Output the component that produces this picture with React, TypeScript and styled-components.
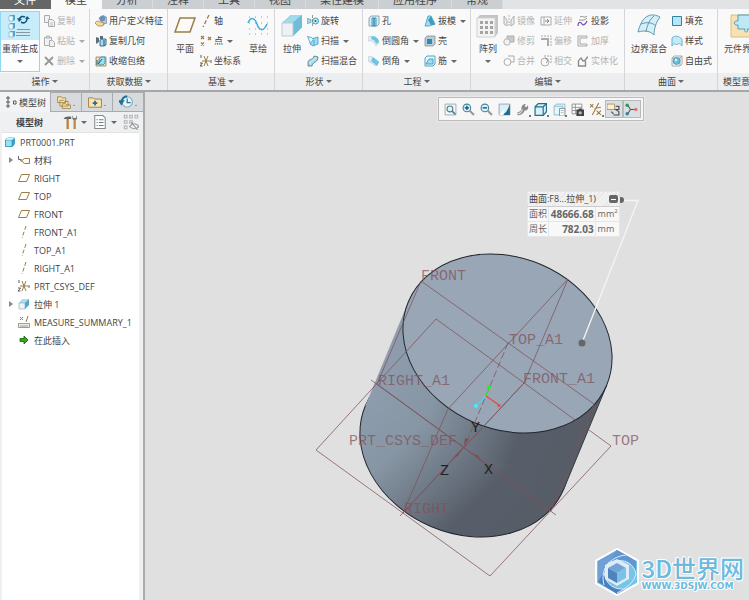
import React from 'react';
import styled, { createGlobalStyle, css } from 'styled-components';

const GlobalStyle = createGlobalStyle`
  *, *::before, *::after { box-sizing: border-box; }
  body {
    margin: 0;
    background: #e0e0e0;
    color: #444;
    font-family: "Open Sans", "Noto Sans CJK SC", sans-serif;
    font-size: 9px;
    overflow: hidden;
  }
  button {
    font: inherit;
    color: inherit;
    background: none;
    border: 0;
    padding: 0;
    margin: 0;
    white-space: nowrap;
  }
  svg { display: block; flex: none; }
`;

/* ---------- shell ---------- */

const Shell = styled.div`
  display: flex;
  flex-direction: column;
  height: 100vh;
  overflow: hidden;
`;

const TabBar = styled.nav`
  display: flex;
  height: 9px;
  flex: none;
  overflow: hidden;
  background: #e2e3e4;
`;

const RibbonTab = styled.button<{ $kind?: 'file' | 'active' }>`
  display: flex;
  align-items: flex-end;
  justify-content: center;
  height: 9px;
  padding: 0 14px 2px;
  font-size: 11px;
  line-height: 14px;
  flex: none;
  overflow: hidden;
  background: #cbcfd2;
  border-right: 1px solid #d9dcde;
  ${p => p.$kind === 'file' && css`background: #666; color: #fff; border-color: #666;`}
  ${p => p.$kind === 'active' && css`background: #fafafa; border-color: #fafafa;`}
`;

const Ribbon = styled.section`
  display: flex;
  flex: none;
  overflow: hidden;
  background: #f9f9fa;
  border-bottom: 2px solid #a5a7a9;
`;

const GroupBox = styled.div<{ $w: number }>`
  display: flex;
  flex-direction: column;
  flex: none;
  min-width: ${p => p.$w}px;
  border-right: 1px solid #d3d5d7;
`;

const GroupBody = styled.div<{ $pad?: number }>`
  display: flex;
  align-items: flex-start;
  height: 64px;
  padding: 2px 0 0 ${p => p.$pad ?? 5}px;
`;

const GroupFoot = styled.button`
  display: flex;
  align-items: center;
  justify-content: center;
  gap: 2px;
  height: 17px;
  background: #eceeef;
`;

const Col = styled.div<{ $w?: number }>`
  display: flex;
  flex-direction: column;
  min-width: ${p => p.$w ?? 0}px;
`;

const Small = styled.button`
  display: flex;
  align-items: center;
  gap: 2px;
  height: 20px;
  line-height: 12px;
  &:disabled { color: #b4b4b4; }
  &:disabled svg { filter: grayscale(1); opacity: 0.6; }
`;

const Big = styled.button<{ $w: number; $hot?: boolean }>`
  display: flex;
  flex-direction: column;
  align-items: center;
  width: ${p => p.$w}px;
  height: 61px;
  padding-top: 2px;
  line-height: 12px;
  border: 1px solid transparent;
  ${p => p.$hot && css`
    border-color: #90d8f2;
    background: linear-gradient(#c8edfa 28px, #fbfdfe 28px);
  `}
`;

const BigLabel = styled.span`
  margin: 5px 0;
`;

const ArrowDown = styled.span<{ $gap?: number }>`
  margin-left: ${p => p.$gap ?? 0}px;
  border: 3px solid transparent;
  border-top: 3px solid #666;
  border-bottom: 0;
  button:disabled & { border-top-color: #aaa; }
`;

/* ---------- side panel ---------- */

const Main = styled.main`
  display: flex;
  flex: 1;
  min-height: 0;
`;

const Side = styled.aside`
  display: flex;
  flex-direction: column;
  width: 145px;
  flex: none;
  background: #eff0f1;
  border-right: 2px solid #a9abad;
`;

const SideTabs = styled.div`
  display: flex;
  height: 20px;
  flex: none;
`;

const SideTab = styled.button<{ $on?: boolean }>`
  display: flex;
  align-items: center;
  justify-content: center;
  gap: 2px;
  flex: 1;
  background: #d8dbdd;
  border: solid #a9abad;
  border-width: 1px 0 1px 1px;
  ${p => p.$on && css`flex: 0 0 50px; background: #f2f3f4; border-color: transparent;`}
`;

const SideTools = styled.div`
  display: flex;
  align-items: center;
  height: 20px;
  flex: none;
  padding: 0 4px 0 16px;
  gap: 6px;
`;

const SideTitle = styled.h2`
  margin: 0;
  flex: 1;
  font-size: 9px;
  font-weight: 600;
`;

const ToolButton = styled.button`
  display: flex;
  align-items: center;
  gap: 4px;
`;

const Tree = styled.ul`
  flex: 1;
  margin: 0 4px 0 2px;
  padding: 0;
  list-style: none;
  background: #fff;
  border-top: 1px solid #e0e2e3;
  overflow: hidden;
`;

const Node = styled.li<{ $root?: boolean }>`
  display: flex;
  align-items: center;
  height: 18px;
  gap: 4px;
  padding-left: ${p => (p.$root ? 2 : 6)}px;
  font-size: 9px;
  white-space: nowrap;
`;

const Twist = styled.button`
  width: 6px;
  height: 8px;
  display: flex;
  align-items: center;
`;

const TwistSpace = styled.span`
  width: 6px;
`;

/* ---------- viewport ---------- */

const Viewport = styled.section`
  position: relative;
  flex: 1;
  min-width: 0;
  background: #e0e0e0;
`;

const Scene = styled.svg`
  width: 100%;
  height: 100%;
  font-family: "Liberation Mono", monospace;
  font-size: 15px;
`;

const FloatBar = styled.div`
  position: absolute;
  top: 5px;
  left: 293px;
  display: flex;
  justify-content: space-between;
  width: 206px;
  padding: 2px;
  border: 1px solid #bbb;
  background: #f7f7f7;
  outline: 1px solid #e9e9e9;
`;

const FloatButton = styled.button<{ $on?: boolean }>`
  display: flex;
  align-items: center;
  justify-content: center;
  position: relative;
  width: 18px;
  height: 18px;
  border: 1px solid transparent;
  ${p => p.$on && css`background: #dcdfe1; border-color: #b7babd;`}
`;

const CornerMark = styled.i`
  position: absolute;
  right: 0;
  bottom: 0;
  width: 2px;
  height: 2px;
  background: #777;
`;

const Measure = styled.table`
  position: absolute;
  top: 99px;
  left: 382px;
  width: 93px;
  border-collapse: collapse;
  background: #f8f8f8;
  border: 1px solid #bcbcbc;
  color: #666;
  line-height: 12px;
  td, th { padding: 1px; border: 1px solid #e6e6e6; white-space: nowrap; }
  th { font-weight: 400; text-align: left; }
  td:last-child { padding-left: 2px; }
  thead th {
    background: repeating-linear-gradient(135deg, #f4f4f4 0 2px, #e4e4e4 2px 3px);
    border-bottom-color: #ccc;
    color: #444;
  }
  sup { font-size: 6px; line-height: 6px; }
`;

const MeasureHead = styled.div`
  display: flex;
  align-items: center;
  justify-content: space-between;
`;

const Value = styled.td`
  font-weight: 700;
  font-size: 10px;
  text-align: right;
`;

const Minus = styled.button`
  width: 9px;
  height: 8px;
  display: flex;
  align-items: center;
  justify-content: center;
  background: #666;
  border-radius: 2px;
  &::after { content: ""; width: 5px; height: 1px; background: #fff; }
`;

const Brand = styled.a`
  position: absolute;
  right: 5px;
  bottom: 4px;
  display: flex;
  align-items: center;
  gap: 3px;
  text-decoration: none;
  color: #6cbade;
`;

const BrandText = styled.span`
  display: flex;
  flex-direction: column;
  text-shadow: 1px 0 #fff, -1px 0 #fff, 0 1px #fff, 0 -1px #fff, 1px 1px #fff, -1px -1px #fff;
`;

const BrandName = styled.strong`
  font-family: "Noto Sans CJK SC", sans-serif;
  font-size: 24px;
  line-height: 28px;
  font-weight: 500;
`;

const BrandUrl = styled.small`
  font: bold 9px/9px "DejaVu Sans", sans-serif;
`;

/* ---------- icons ---------- */

const INK = '#5b6e7a';
const BLUE = '#3c9cc4';
const SKY = '#9fdcf1';
const GOLD = '#9b7d45';

const art: Record<string, React.ReactNode> = {
  copy: <g fill="#eee" stroke="#777"><path d="M1.500 .5h5v7h-5z" /><path d="M5.500 4.500h4l2 2v5h-6z" /><path d="M7 8h3M7 10h3" strokeWidth=".7" /></g>,
  paste: <g fill="#eee" stroke="#777"><path d="M1.500 2.500h7v8h-7z" /><path d="M3.500 1h3v2h-3z" /><path d="M6.500 5.500h3l2 2v4h-5z" /></g>,
  del: <path d="M2 2l8 8M10 2l-8 8" stroke="#555" strokeWidth="1.800" />,
  udf: <g><path d="M4 3l4-2.500 4 2V8L8 9.500z" fill="#b5c6da" stroke={INK} strokeWidth=".6" /><circle cx="7.500" cy="3.500" r="2.800" fill="#6c90bd" /><path d="M0 8c2-3 4-2 6-1l3 1-1 3H3z" fill="#f3d89b" stroke={GOLD} strokeWidth=".7" /></g>,
  geom: <g><path d="M1 2v7l3-2V3zM5 1h3v3H5z" fill={INK} /><path d="M5 5l2-1h4v6l-2 1H5z" fill={SKY} stroke="#24576e" strokeWidth=".8" /><path d="M9 5v6" stroke="#24576e" /></g>,
  shrink: <g><path d="M1 2h10v9H1z" fill="#f1e3bd" stroke={GOLD} strokeWidth=".8" /><path d="M4 4l2-2h4v6L8 10H4z" fill={SKY} stroke={BLUE} /><path d="M3 9l4-5M2 5v5" stroke="#24576e" /></g>,
  axis: <path d="M9 0L3 12" stroke={GOLD} strokeWidth="1.300" strokeDasharray="4 2" />,
  point: <g stroke={GOLD}><path d="M1 1l3 3M4 1L1 4M8 2l3 3M11 2l-3 3M1 7.500l3 3M4 7.500l-3 3" strokeWidth="1.200" /></g>,
  csys: <g stroke={GOLD}><path d="M4 1l4 10M8 1L4 11M2 6h8" /><path d="M1 0v3M0 8h2.500L0 11h2.500M11 5v3" stroke="#333" strokeWidth=".8" /></g>,
  revolve: <g><path d="M0 3.500l4 1v3l-4 1z" fill={SKY} stroke={BLUE} strokeWidth=".7" /><circle cx="8.500" cy="6" r="3" fill="#c9ebf6" stroke={BLUE} /><circle cx="8.500" cy="6" r="1" fill="#24576e" /><path d="M5.500 0v12" stroke={GOLD} strokeWidth=".8" strokeDasharray="3 1" /></g>,
  sweep: <g stroke={BLUE} strokeWidth=".8"><path d="M4 4l7-2v7l-5 2-3-2z" fill={SKY} /><path d="M.5 1.500l4 1 2 2-3 4z" fill="#def4fa" /><path d="M7 5v5" /></g>,
  blend: <g><path d="M1 8c0-5 5-2 6-7l4 1c0 6-5 4-6 9l-4 0z" fill={SKY} stroke={INK} strokeWidth=".8" /><path d="M3 9c0-4 5-3 6-7" stroke="#def4fa" /></g>,
  hole: <g><path d="M1 3l2-2h8v8l-2 2H1z" fill="#d7eef6" stroke="#82959e" strokeWidth=".8" /><path d="M4 3h4v8H4z" fill={SKY} stroke={BLUE} /><path d="M6 3v8" stroke="#246985" /></g>,
  round: <g><path d="M0 2c5-2 9 1 11 6l-3 3C6 7 4 5 0 6z" fill="#e1eff4" stroke="#b7c6cc" strokeWidth=".6" /><path d="M4 1c4 0 7 3 7 6L8 9C7 6 6 5 3 4z" fill="#6cc3e3" /></g>,
  chamfer: <g><path d="M0 2l3-1 8 6-3 4-8-5z" fill="#dcebf1" stroke="#b7c6cc" strokeWidth=".6" /><path d="M5 2l6 5-2 4-6-5z" fill="#6cc3e3" /></g>,
  draft: <g><path d="M4 1l3 0 4 8-6 2H1z" fill={SKY} stroke={BLUE} strokeWidth=".8" /><path d="M7 1l4 9H7L4 5z" fill="#3f9cc0" /></g>,
  shell: <g><path d="M1 3l2-2h8v8l-2 2H1z" fill="#b9cdd5" stroke="#80949d" strokeWidth=".8" /><path d="M3 4h5v5H3z" fill="#318bb1" /></g>,
  rib: <g fill="none" stroke={BLUE} strokeWidth=".9"><path d="M1 3l2-2h8v8l-2 2H1z" fill="#e6f5fa" /><path d="M2 9l3-5h4v5z" fill={SKY} /></g>,
  mirror: <g fill="#e5e5e5" stroke="#777" strokeWidth=".9"><path d="M1 1l3 4v6L1 9zM11 1L8 5v6l3-2z" /><path d="M6 0v12" strokeDasharray="2 1" /></g>,
  trim: <g fill="#aaa" stroke="#777" strokeWidth=".9"><path d="M4 1h7v6H4z" /><circle cx="4" cy="7" r="3.200" fill="#eee" /></g>,
  merge: <g fill="none" stroke="#777"><path d="M5 1h6v6H8" /><circle cx="4.500" cy="7" r="3.500" /></g>,
  extend: <g fill="none" stroke="#777"><path d="M1 2h10v8H1zM4 2v8" /><path d="M5 6h4M7 4l2 2-2 2" stroke="#333" /></g>,
  offset: <g fill="none" stroke="#777"><path d="M1 1h10v10" strokeDasharray="2 1" /><path d="M1 4h7v7" strokeWidth="2" /></g>,
  intersect: <g fill="none" stroke="#777"><path d="M4 1h7v7" strokeDasharray="2 1" /><circle cx="5" cy="7" r="4" /><path d="M5 3c3 1 3 4 1 5" stroke="#333" /></g>,
  project: <g fill="none"><path d="M3 2c3-2 4 2 7-1M2 5c3 0 5 1 8-2" stroke="#8d9497" /><path d="M1 11c0-5 3-4 4-2s4 0 5-3" stroke="#7f4eae" strokeWidth="1.200" /></g>,
  thicken: <path d="M10 1H1v10h9V9H3V3h7z" fill="#eee" stroke="#777" />,
  solid: <path d="M2 5l2-2 2 3c3 1 3-4 5-4M1.500 5v6h7V6" fill="none" stroke="#444" strokeWidth="1.400" />,
  fill: <path d="M1.500 1.500h9v9h-9z" fill="#b7e7f6" stroke="#34809f" />,
  style: <path d="M1 3c3-3 7-2 10 1v7c-2-3-4-3-5-1-2-2-4-1-5 1z" fill="#c6eaf5" stroke="#4ba7cb" strokeWidth=".8" />,
  free: <g><path d="M1 3l2-2h8v8l-2 2H1zM1 3h8v8M9 3l2-2" fill="none" stroke="#999" strokeWidth=".8" /><circle cx="5.500" cy="6" r="3.500" fill="#65bfe0" stroke="#2f86a8" strokeWidth=".6" /><circle cx="5" cy="5" r="1.200" fill="#dff5fc" /></g>,

  part: <g stroke="#2f94ba" strokeWidth=".7"><path d="M1.500 4l2-2h7v6l-2 2.500h-7z" fill="#3f9fc4" /><path d="M1.500 4H8v6.500H1.500z" fill="#9be0f3" /><path d="M1.500 4l2-2h7L8 4z" fill="#c8effa" stroke="none" /></g>,
  material: <g fill="none"><path d="M.5 2v3.500h3M1 5l3 2.500" stroke="#666" /><path d="M3.500 7l3-2.500h5v5h-5z" stroke={GOLD} fill="#fbf8f0" /></g>,
  plane: <path d="M3.500 2.500h8l-3 7h-8z" fill="none" stroke={GOLD} />,
  axisThin: <path d="M8 0L4 12" stroke={GOLD} strokeDasharray="4 2" />,
  extrude: <g><path d="M1 5l4-4h6v6l-4 4z" fill="#4fa6cb" /><path d="M5 1h6L7 5H1z" fill="#a9dff0" /><path d="M1 5h6v6H1z" fill="#edf3f6" stroke="#91a5af" strokeWidth=".6" /></g>,
  ruler: <g><path d="M2 1l3 3M5 1L2 4M10 0L8 6" stroke={GOLD} /><path d="M.5 7.500h11v4H.5zM3 9v2M5 9v2M7 9v2M9 9v2" fill="#eee" stroke="#777" strokeWidth=".7" /></g>,
  insert: <path d="M2 4.500h4V2l4 4-4 4V7.500H2z" fill="#38a31d" stroke="#14610a" strokeWidth=".8" />,

  treeTab: <g fill="#fff" stroke="#555"><path d="M2 1h2v2H2zM2 5h2v2H2zM2 9h2v2H2zM8.500 5h2.500v3H8.500z" /></g>,
  folders: <g fill="#fbe5ad" stroke={GOLD} strokeWidth=".7"><path d="M.5 1.500h3l1 1h3v4h-7zM2.500 4.500h3l1 1h3v4h-7zM4.500 7.500h3l1 1h3v3h-7z" /></g>,
  favorite: <g><path d="M.5 2.500h4l1 1h6v7H.5z" fill="#fbe5ad" stroke={GOLD} strokeWidth=".8" /><path d="M6 5v4M4 7h4" stroke="#216f99" strokeWidth="1.500" /></g>,
  history: <g fill="none" stroke="#1f7299"><circle cx="7" cy="6" r="4.500" fill="#e4f4fa" stroke="#8fa9b5" /><path d="M7 3v3.500h3" /><path d="M0 5l2 3 2-3z" fill="#1f7299" /><path d="M2.200 6A5 5 0 0 1 7 1.200" strokeWidth="1.800" /></g>,
  hammer: <g><path d="M4 3v9" stroke="#bc813c" strokeWidth="2" /><path d="M.5 3.500c1-2 3-2.500 6.500-2v2H4z" fill="#666" /><path d="M8 0v3l1 1.500h2L12 3V0l-1 2.500H9z" fill="#777" /><path d="M10 4v8" stroke="#c08a48" strokeWidth="2" /></g>,
  list: <g fill="#fff" stroke="#888" strokeWidth=".9"><path d="M1.500.5h7l2 2v9h-9z" /><path d="M3 4h1M3 6.500h1M3 9h1M5 4h4M5 6.500h4M5 9h4" stroke="#5a7f95" /></g>,
  treeFind: <g fill="none" stroke="#b4b4b4" strokeWidth=".8"><path d="M1 1h2v2H1zM1 5h2v2H1zM1 9h2v2H1zM5 1h2v2H5zM9 1h2v2H9zM5 5h2v2H5z" /><path d="M5 9.500c2-3 5-3 7 0-2 2-5 2-7 0zM6 6l5 6" stroke="#999" /></g>,

  zoomFit: <g fill="none"><path d="M1 1h10v10H1z" stroke="#9aa4aa" strokeWidth=".8" /><circle cx="5.500" cy="5.500" r="2.700" fill="#e2f3fa" stroke="#4e7f97" /><path d="M7.500 7.500l3 3" stroke="#4e7f97" strokeWidth="1.500" /></g>,
  zoomIn: <g><circle cx="4.500" cy="4.500" r="3.500" fill="#d8f0fa" stroke="#3f85a5" /><path d="M2.500 4.500h4M4.500 2.500v4" stroke="#124d6c" strokeWidth="1.200" /><path d="M7 7l4 4" stroke="#999" strokeWidth="2" /></g>,
  zoomOut: <g><circle cx="4.500" cy="4.500" r="3.500" fill="#d8f0fa" stroke="#3f85a5" /><path d="M2.500 4.500h4" stroke="#124d6c" strokeWidth="1.200" /><path d="M7 7l4 4" stroke="#999" strokeWidth="2" /></g>,
  repaint: <g><path d="M1 1h10v10H1z" fill="#d9f0f8" stroke="#8da0aa" strokeWidth=".8" /><path d="M11 1v10H4c4-2 5-5 7-10z" fill="#1c6c90" /><path d="M1 11l5-5-1 5z" fill="#fff" /></g>,
  shade: <g><path d="M1 9c2-1 3-1 4-3 0-3 1-5 4-5L8 3l1.500 1L11 2c1 4-1 5-3 5-1 3-4 5-7 4z" fill="#8a8a8a" /><path d="M1 10c3 0 4-1 5-4" stroke="#ddd" /></g>,
  box: <g fill="#d8f1fa" stroke="#20708f" strokeWidth="1.100"><path d="M1 3.500l3-3h7.500v7.500l-3 3.500H1z" /><path d="M1 3.500h7.500v8M8.500 3.500l3-3" fill="none" /></g>,
  views: <g fill="#e4f5fb" stroke="#84b7cc" strokeWidth=".8"><path d="M1 3l2-2h8v7l-2 3H1zM1 3h8v7" /><path d="M6 5h5v7H6z" fill="#fff" stroke="#888" /><path d="M7 7h3M7 9h3" /></g>,
  camera: <g><path d="M1 1h9v9H1zM1 4h9M1 7h9M4 1v9" fill="#fff" stroke="#888" strokeWidth=".8" /><path d="M5 6h7v6H5zM7 5h3v1H7z" fill="#444" /><circle cx="8.500" cy="9" r="1.500" fill="#bbb" /></g>,
  datum: <g stroke={GOLD}><path d="M1 1l3 3M4 1L1 4M9 0L3 11M7 7l4 4M11 7l-4 4M5 5l6-1" /></g>,
  annot: <g><path d="M0 1h7v5H0z" fill="#fbf0cd" stroke="#a7935d" strokeWidth=".8" /><path d="M8 3h3v3H8l3 2v3H6M4 8l2 2" fill="none" stroke="#444" /></g>,
  spin: <g><path d="M5 6L2 1M5 6l-3 5M5 6h5" stroke="#555" /><circle cx="2" cy="2" r="1.600" fill="#2d9c53" /><circle cx="2" cy="10" r="1.600" fill="#2f82aa" /><circle cx="10" cy="6" r="1.600" fill="#d8786e" /></g>,
};

const Icon = ({ n, size = 12 }: { n: string; size?: number }) => (
  <svg width={size} height={size} viewBox="0 0 12 12" fill="none" aria-hidden="true">{art[n]}</svg>
);

const bigArt: Record<string, React.ReactNode> = {
  regen: (
    <g>
      {[0, 8, 16].map(y => (
        <g key={y}><path d={`M1 ${y + 2}l2-1h4v5l-2 1H1z`} fill="#47a5c9" /><path d={`M1 ${y + 2}h4v5H1z`} fill="#eefaff" stroke="#77adc3" strokeWidth=".6" /></g>
      ))}
      <path d="M11 6c1-4 4-4 6-3M19 5c0 3-3 5-6 3" fill="none" stroke="#135c80" strokeWidth="1.600" />
      <path d="M9 4l2 4 3-3zM17 5l2-3 3 3z" fill="#135c80" />
      <path d="M9 15.500h13M8 18.500h14M8 21.500h14" stroke="#8798a1" />
    </g>
  ),
  plane: <path d="M7 4h15l-5 14H2z" fill="#fbfaf6" stroke={GOLD} strokeWidth="1.500" />,
  sketch: (
    <g><path d="M3 3h20M3 9h20M3 15h20M3 20h20" stroke="#999" strokeDasharray="1 5" />
      <path d="M2 9c3-7 7-5 9 1s6 9 10 0" fill="none" stroke="#3faed6" strokeWidth="1.500" /></g>
  ),
  extrude: (
    <g><path d="M2 9l9-8h11v12l-9 9H2z" fill="#3995bb" /><path d="M11 1h11l-9 8H2z" fill="#9edbed" /><path d="M22 1v12l-9 9V9z" fill="#70bdd7" />
      <path d="M2 9h11v13H2z" fill="#edf1f3" stroke="#c1cbd0" /></g>
  ),
  pattern: (
    <g><path d="M1 4l3-3h18v18l-3 4H1z" fill="#c4c4c4" /><path d="M1 4h18v19H1z" fill="#f3f3f3" stroke="#d1d1d1" />
      {[0, 1, 2].map(r => [0, 1, 2].map(c => <path key={`${r}${c}`} d={`M${4 + c * 5} ${7 + r * 5}h3v3h-3z`} fill="#a4a4a4" />))}</g>
  ),
  boundary: (
    <g stroke="#568da6" strokeWidth=".9"><path d="M1 18C3 10 6 4 11 2c4-2 8-1 12 1-4 5-6 12-6 18-4-4-9-5-16-3z" fill="#d5eff8" />
      <path d="M9 18C10 12 12 6 17 2M4 10c5-2 11-2 15 2" fill="none" /></g>
  ),
  puzzle: (
    <g><path d="M1 1h24v22H1z" fill="#f8e2b4" stroke="#d8bd83" /><path d="M8 1h14v14h-5c3 4-4 4-2 0H8v-4c-5 1-5-5 0-4z" fill="#bfe8f5" stroke="#4b9fbe" /></g>
  ),
};

const BigIcon = ({ n }: { n: string }) => (
  <svg width="24" height="24" viewBox="0 0 24 24" aria-hidden="true">{bigArt[n]}</svg>
);

/* ---------- ribbon content ---------- */

type Item = { icon: string; label: string; menu?: boolean; off?: boolean };

const Items = ({ list, w }: { list: Item[]; w?: number }) => (
  <Col $w={w}>
    {list.map(i => (
      <Small key={i.label} disabled={i.off}>
        <Icon n={i.icon} />{i.label}{i.menu && <ArrowDown $gap={2} />}
      </Small>
    ))}
  </Col>
);

const BigButton = ({ icon, label, w, hot, menu }: { icon: string; label: string; w: number; hot?: boolean; menu?: boolean }) => (
  <Big $w={w} $hot={hot}>
    <BigIcon n={icon} /><BigLabel>{label}</BigLabel>{menu && <ArrowDown />}
  </Big>
);

const Group = ({ title, w, pad, plain, children }: { title: string; w: number; pad?: number; plain?: boolean; children: React.ReactNode }) => (
  <GroupBox $w={w}>
    <GroupBody $pad={pad}>{children}</GroupBody>
    <GroupFoot>{title}{!plain && <ArrowDown />}</GroupFoot>
  </GroupBox>
);

const tabs = ['文件', '模型', '分析', '注释', '工具', '视图', '柔性建模', '应用程序', '常规'];

const nodes: { icon: string; label: string; root?: boolean; open?: boolean }[] = [
  { icon: 'part', label: 'PRT0001.PRT', root: true },
  { icon: 'material', label: '材料', open: true },
  { icon: 'plane', label: 'RIGHT' },
  { icon: 'plane', label: 'TOP' },
  { icon: 'plane', label: 'FRONT' },
  { icon: 'axisThin', label: 'FRONT_A1' },
  { icon: 'axisThin', label: 'TOP_A1' },
  { icon: 'axisThin', label: 'RIGHT_A1' },
  { icon: 'csys', label: 'PRT_CSYS_DEF' },
  { icon: 'extrude', label: '拉伸 1', open: true },
  { icon: 'ruler', label: 'MEASURE_SUMMARY_1' },
  { icon: 'insert', label: '在此插入' },
];

const viewTools: { icon: string; label: string; more?: boolean; on?: boolean }[] = [
  { icon: 'zoomFit', label: '重新调整' },
  { icon: 'zoomIn', label: '放大' },
  { icon: 'zoomOut', label: '缩小' },
  { icon: 'repaint', label: '重画' },
  { icon: 'shade', label: '渲染', more: true },
  { icon: 'box', label: '显示样式', more: true },
  { icon: 'views', label: '已保存方向', more: true },
  { icon: 'camera', label: '视图管理器' },
  { icon: 'datum', label: '基准显示', more: true },
  { icon: 'annot', label: '注释显示', on: true },
  { icon: 'spin', label: '旋转中心', on: true },
];

const Model = () => (
  <Scene viewBox="145 92 604 508" aria-label="PRT0001">
    <defs>
      <linearGradient id="wall" gradientUnits="userSpaceOnUse" x1="365" y1="406" x2="564" y2="488">
        <stop offset="0" stopColor="#8e9dad" />
        <stop offset=".28" stopColor="#8796a5" />
        <stop offset=".5" stopColor="#707b88" />
        <stop offset=".72" stopColor="#575e69" />
        <stop offset="1" stopColor="#565d67" />
      </linearGradient>
    </defs>
    <g fill="url(#wall)">
      <ellipse cx="464.500" cy="447.500" rx="107.600" ry="85.800" transform="rotate(23 464.500 447.500)" stroke="#20262c" />
      <path d="M408.200 302L365.200 406L563.800 489L606.800 385z" />
    </g>
    <path d="M606.800 385L563.800 489" stroke="#353b43" />
    <ellipse cx="507.500" cy="343.500" rx="107.600" ry="85.800" transform="rotate(23 507.500 343.500)" fill="#98a6b6" stroke="#20262c" />
    <g fill="none" stroke="#80505a" strokeOpacity=".75">
      <path d="M316 450L436 319L611 446L490 576z" />
      <path d="M421 281L594 404L551 511L377 384z" />
      <path d="M568 279L524 383L403 513L448 409z" />
      <path d="M371 380L556 515M524 383L400 516" />
      <path d="M508 343L465 446" strokeDasharray="7 3" />
    </g>
    <g fill="#80505a">
      <path d="M464 446l1-8 4 1zM463 447l-11 12 6-3zM471 453l10 8-3-6z" />
    </g>
    <g fill="#80505a" fillOpacity=".72">
      <text x="421" y="280">FRONT</text>
      <text x="509" y="344">TOP_A1</text>
      <text x="523" y="383">FRONT_A1</text>
      <text x="378" y="385">RIGHT_A1</text>
      <text x="349" y="445">PRT_CSYS_DEF</text>
      <text x="612" y="445">TOP</text>
      <text x="404" y="513">RIGHT</text>
    </g>
    <g fill="#1e2226">
      <text x="471" y="432">Y</text>
      <text x="440" y="475">Z</text>
      <text x="484" y="474">X</text>
    </g>
    <g strokeWidth="1.300">
      <path d="M486 396l3-9" stroke="#2fe82f" /><circle cx="489" cy="387" r="2" fill="#2fe82f" />
      <path d="M486 396l-10 10" stroke="#3fdcec" /><circle cx="476" cy="406" r="2" fill="#3fefff" />
      <path d="M486 396l13 9" stroke="#ee4444" /><circle cx="499" cy="405.500" r="1.500" fill="#ee4444" />
    </g>
    <path d="M622 200.500h16L582 343" fill="none" stroke="#f5f5f5" strokeWidth="1.300" />
    <circle cx="621" cy="200" r="3" fill="#666" />
    <circle cx="582" cy="343" r="3.500" fill="#666" />
  </Scene>
);

const BrandMark = () => (
  <svg width="44" height="48" viewBox="0 0 44 48" aria-hidden="true">
    <path d="M22 1L43 12.500V35.500L22 47L1 35.500V12.500z" fill="#78c3e8" stroke="#fff" strokeWidth="2" />
    <path d="M22 2L3 13v21l6 3C6 27 12 17 31 7z" fill="#6f9fd4" />
    <path d="M22 2l19 11v12C37 12 27 9 13 15z" fill="#6196d0" />
    <path d="M3 34l19 12 9-5C18 42 10 36 9 24z" fill="#4d80be" />
    <path d="M9 37C5 21 14 9 31 7M13 15c14-6 26 0 28 11M9 24c2 13 10 18 22 17M41 26c-2 8-9 14-19 19" fill="none" stroke="#d9effa" />
    <path d="M22 11l12 6v14l-12 7-12-7V17z" fill="#ddecf6" />
    <path d="M22 15l9 5-9 5-9-5z" fill="#73a4d6" />
    <path d="M13 20l9 5v10l-9-5z" fill="#4f83c0" />
    <path d="M31 20l-9 5v10l9-5z" fill="#78c3e8" />
  </svg>
);

export default function App() {
  return (
    <Shell>
      <GlobalStyle />
      <TabBar>
        {tabs.map((t, i) => (
          <RibbonTab key={t} $kind={i === 0 ? 'file' : i === 1 ? 'active' : undefined}>{t}</RibbonTab>
        ))}
      </TabBar>
      <Ribbon>
        <Group title="操作" w={90} pad={0}>
          <BigButton icon="regen" label="重新生成" w={40} hot menu />
          <Col $w={3} />
          <Items list={[
            { icon: 'copy', label: '复制', off: true },
            { icon: 'paste', label: '粘贴', menu: true, off: true },
            { icon: 'del', label: '删除', menu: true, off: true },
          ]} />
        </Group>
        <Group title="获取数据" w={78}>
          <Items list={[
            { icon: 'udf', label: '用户定义特征' },
            { icon: 'geom', label: '复制几何' },
            { icon: 'shrink', label: '收缩包络' },
          ]} />
        </Group>
        <Group title="基准" w={107} pad={2}>
          <BigButton icon="plane" label="平面" w={30} />
          <Items w={44} list={[
            { icon: 'axis', label: '轴' },
            { icon: 'point', label: '点', menu: true },
            { icon: 'csys', label: '坐标系' },
          ]} />
          <BigButton icon="sketch" label="草绘" w={28} />
        </Group>
        <Group title="形状" w={88} pad={2}>
          <BigButton icon="extrude" label="拉伸" w={30} />
          <Items list={[
            { icon: 'revolve', label: '旋转' },
            { icon: 'sweep', label: '扫描', menu: true },
            { icon: 'blend', label: '扫描混合' },
          ]} />
        </Group>
        <Group title="工程" w={108}>
          <Items w={56} list={[
            { icon: 'hole', label: '孔' },
            { icon: 'round', label: '倒圆角', menu: true },
            { icon: 'chamfer', label: '倒角', menu: true },
          ]} />
          <Items list={[
            { icon: 'draft', label: '拔模', menu: true },
            { icon: 'shell', label: '壳' },
            { icon: 'rib', label: '筋', menu: true },
          ]} />
        </Group>
        <Group title="编辑" w={154} pad={2}>
          <BigButton icon="pattern" label="阵列" w={30} menu />
          <Items w={37} list={[
            { icon: 'mirror', label: '镜像', off: true },
            { icon: 'trim', label: '修剪', off: true },
            { icon: 'merge', label: '合并', off: true },
          ]} />
          <Items w={37} list={[
            { icon: 'extend', label: '延伸', off: true },
            { icon: 'offset', label: '偏移', off: true },
            { icon: 'intersect', label: '相交', off: true },
          ]} />
          <Items list={[
            { icon: 'project', label: '投影' },
            { icon: 'thicken', label: '加厚', off: true },
            { icon: 'solid', label: '实体化', off: true },
          ]} />
        </Group>
        <Group title="曲面" w={93} pad={2}>
          <BigButton icon="boundary" label="边界混合" w={44} />
          <Items list={[
            { icon: 'fill', label: '填充' },
            { icon: 'style', label: '样式' },
            { icon: 'free', label: '自由式' },
          ]} />
        </Group>
        <Group title="模型意图" w={44} pad={2} plain>
          <BigButton icon="puzzle" label="元件界面" w={44} />
        </Group>
      </Ribbon>
      <Main>
        <Side>
          <SideTabs>
            <SideTab $on><Icon n="treeTab" />模型树</SideTab>
            <SideTab aria-label="文件夹浏览器"><Icon n="folders" size={14} />.</SideTab>
            <SideTab aria-label="收藏夹"><Icon n="favorite" size={14} />.</SideTab>
            <SideTab aria-label="历史记录"><Icon n="history" size={14} />.</SideTab>
          </SideTabs>
          <SideTools>
            <SideTitle>模型树</SideTitle>
            <ToolButton aria-label="设置"><Icon n="hammer" size={14} /><ArrowDown /></ToolButton>
            <ToolButton aria-label="显示"><Icon n="list" size={14} /><ArrowDown /></ToolButton>
            <ToolButton aria-label="查找"><Icon n="treeFind" size={16} /></ToolButton>
          </SideTools>
          <Tree>
            {nodes.map(n => (
              <Node key={n.label} $root={n.root}>
                {!n.root && (n.open
                  ? <Twist aria-label="展开"><svg width="6" height="8" viewBox="0 0 6 8"><path d="M1 1l4 3-4 3z" fill="#888" /></svg></Twist>
                  : <TwistSpace />)}
                <Icon n={n.icon} />{n.label}
              </Node>
            ))}
          </Tree>
        </Side>
        <Viewport>
          <Model />
          <FloatBar>
            {viewTools.map(t => (
              <FloatButton key={t.icon} aria-label={t.label} $on={t.on}>
                <Icon n={t.icon} size={13} />{t.more && <CornerMark />}
              </FloatButton>
            ))}
          </FloatBar>
          <Measure>
            <thead>
              <tr><th colSpan={3}><MeasureHead>曲面:F8...拉伸_1)<Minus aria-label="折叠" /></MeasureHead></th></tr>
            </thead>
            <tbody>
              <tr><th>面积</th><Value>48666.68</Value><td>mm<sup>2</sup></td></tr>
              <tr><th>周长</th><Value>782.03</Value><td>mm</td></tr>
            </tbody>
          </Measure>
          <Brand href="#">
            <BrandMark />
            <BrandText>
              <BrandName>3D世界网</BrandName>
              <BrandUrl>WWW.3DSJW.COM</BrandUrl>
            </BrandText>
          </Brand>
        </Viewport>
      </Main>
    </Shell>
  );
}
